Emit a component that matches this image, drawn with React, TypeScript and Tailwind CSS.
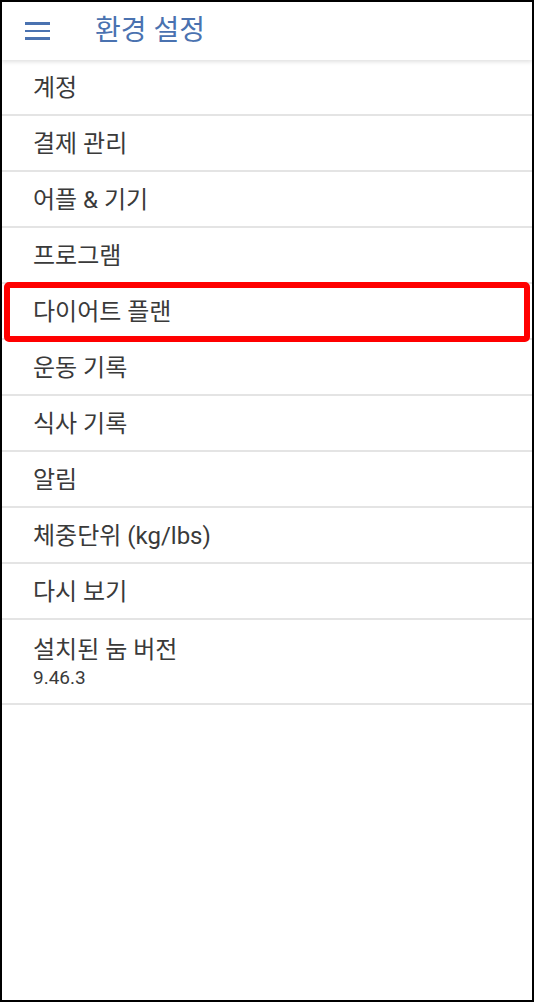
import React from 'react';

const items = [
  '계정',
  '결제 관리',
  '어플 & 기기',
  '프로그램',
  '다이어트 플랜',
  '운동 기록',
  '식사 기록',
  '알림',
  '체중단위 (kg/lbs)',
  '다시 보기',
];

const App = () => {
  return (
    <div
      className="w-[534px] h-[1002px] border-2 border-black bg-white overflow-hidden"
      style={{ fontFamily: 'Roboto, "Noto Sans CJK KR", sans-serif' }}
    >
      {/* Top bar */}
      <div className="relative z-10 h-[58px] flex items-center bg-white shadow-[0_2px_4px_rgba(0,0,0,0.12)]">
        <div className="ml-[23px] w-[25px] flex flex-col gap-[5px]">
          <span className="block h-[2.5px] bg-[#4a72b0]" />
          <span className="block h-[2.5px] bg-[#4a72b0]" />
          <span className="block h-[2.5px] bg-[#4a72b0]" />
        </div>
        <h1 className="ml-[45px] text-[28px] leading-none text-[#4a72b0]">환경 설정</h1>
      </div>

      {/* Settings list */}
      <ul>
        {items.map(label => (
          <li
            key={label}
            className="relative h-[56px] flex items-center pl-[31px] pt-[2px] border-b-2 border-[#e4e4e4] text-[24px] text-[#3a3a3a]"
          >
            {label}
            {label === '다이어트 플랜' && (
              <div className="absolute left-[2px] right-[2px] top-[-2px] bottom-[-4px] border-[6px] border-[#ff0000] rounded-[5px]" />
            )}
          </li>
        ))}
        <li className="h-[85px] flex flex-col justify-center pl-[31px] border-b-2 border-[#e4e4e4] text-[#3a3a3a]">
          <span className="text-[24px] leading-[32px]">설치된 눔 버전</span>
          <span className="text-[19px] leading-[24px]">9.46.3</span>
        </li>
      </ul>
    </div>
  );
};

export default App;
